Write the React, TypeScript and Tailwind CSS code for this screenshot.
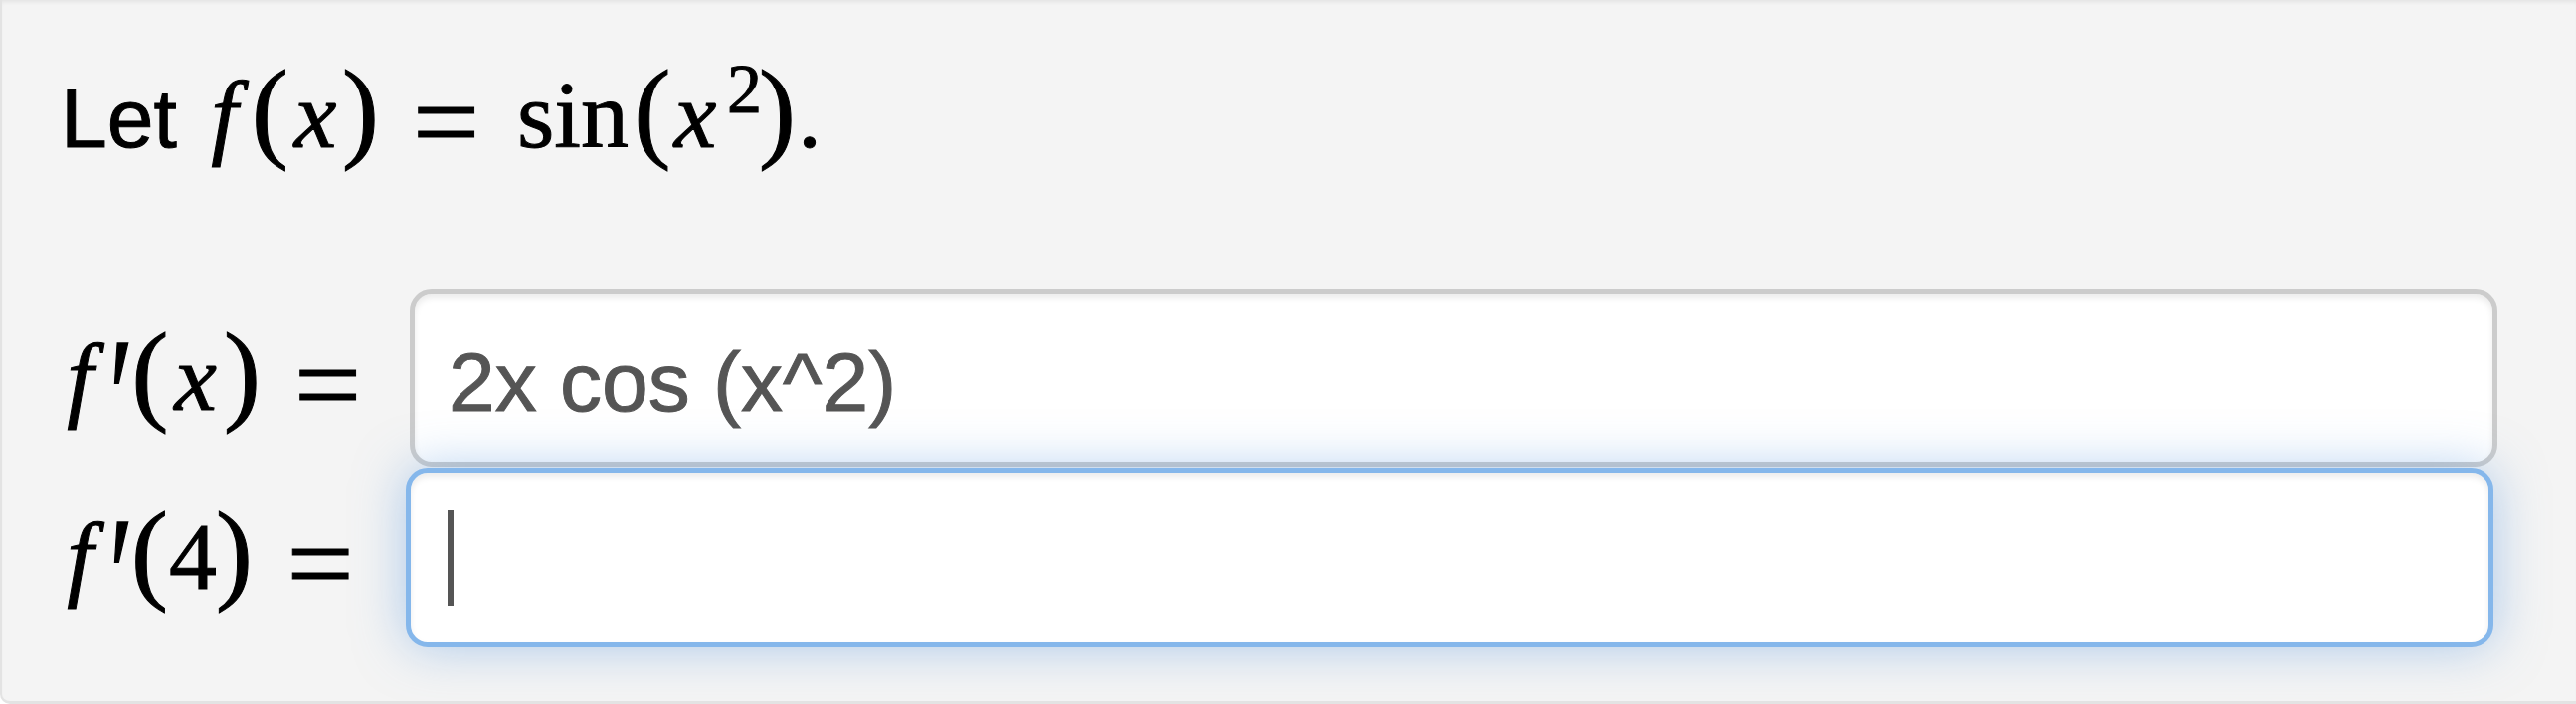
import type { ReactNode } from "react";

const serif =
  "font-['Liberation_Serif','Times_New_Roman',serif] [-webkit-text-stroke:1px_#000000]";
const sans = "font-['Liberation_Sans',Arial,sans-serif]";

function G({ className, children }: { className: string; children: ReactNode }) {
  return (
    <span className={`inline-flex shrink-0 justify-center leading-none ${className}`}>
      {children}
    </span>
  );
}

export default function App() {
  return (
    <div className="w-[2590px] h-[708px] overflow-hidden bg-[#f4f4f4] border-l-2 border-b-[3px] border-[#e3e3e3] rounded-bl-[10px] shadow-[inset_0_4px_4px_-2px_rgba(0,0,0,0.07)] pl-[48px] text-black">
      {/* statement */}
      <div className={`flex items-baseline h-[291px] pt-[48px] ${serif}`}>
        <G className={`w-[147px] justify-start pl-[11px] text-[84px] ${sans} [-webkit-text-stroke:1px_#000000]`}>
          Let
        </G>
        <G className="w-[57px] text-[96px] italic">f</G>
        <G className="w-[35px] text-[112px]">(</G>
        <G className="w-[56px] text-[96px] italic">x</G>
        <G className="w-[35px] text-[112px]">)</G>
        <G className="w-[137px] text-[120px] translate-y-[15px]">=</G>
        <G className="w-[118px] text-[96px]">sin</G>
        <G className="w-[42px] text-[112px]">(</G>
        <G className="w-[44px] text-[96px] italic">x</G>
        <G className="w-[55px] text-[70px] -translate-y-[35px]">2</G>
        <G className="w-[11px] text-[112px]">)</G>
        <G className="w-[54px] text-[96px]">.</G>
      </div>

      {/* f'(x) row */}
      <div className="flex items-start h-[180px]">
        <div className={`flex items-baseline pt-[21px] ${serif}`}>
          <G className="w-[61px] text-[96px] italic">f</G>
          <G className="w-[22px] text-[96px] origin-[50%_24px] scale-x-[1.15] scale-y-[1.76] translate-y-[1px]">′</G>
          <G className="w-[36px] text-[112px]">(</G>
          <G className="w-[55px] text-[96px] italic">x</G>
          <G className="w-[39px] text-[112px]">)</G>
          <G className="w-[133px] text-[120px] translate-y-[15px]">=</G>
        </div>
        <input
          readOnly
          defaultValue="2x cos (x^2)"
          className={`ml-[16px] w-[2099px] h-[179px] shrink-0 rounded-[22px] border-[5px] border-[#cccccc] bg-white pl-[34px] pt-[8px] text-[84px] text-[#555555] [-webkit-text-stroke:1px_#555555] outline-none shadow-[inset_0_4px_6px_rgba(0,0,0,0.08)] ${sans}`}
        />
      </div>

      {/* f'(4) row */}
      <div className="flex items-start h-[180px]">
        <div className={`flex items-baseline pt-[21px] ${serif}`}>
          <G className="w-[61px] text-[96px] italic">f</G>
          <G className="w-[22px] text-[96px] origin-[50%_24px] scale-x-[1.15] scale-y-[1.76] translate-y-[1px]">′</G>
          <G className="w-[35px] text-[112px]">(</G>
          <G className="w-[52px] text-[96px]">4</G>
          <G className="w-[31px] text-[112px]">)</G>
          <G className="w-[142px] text-[120px] translate-y-[15px]">=</G>
        </div>
        <div className="ml-[15px] w-[2099px] h-[180px] shrink-0 flex items-center rounded-[22px] border-[5px] border-[#85b7eb] bg-white pl-[37px] shadow-[inset_0_4px_6px_rgba(0,0,0,0.08),0_0_50px_rgba(102,160,225,0.5)]">
          <span className="w-[6px] h-[96px] bg-[#555555]" />
        </div>
      </div>
    </div>
  );
}
